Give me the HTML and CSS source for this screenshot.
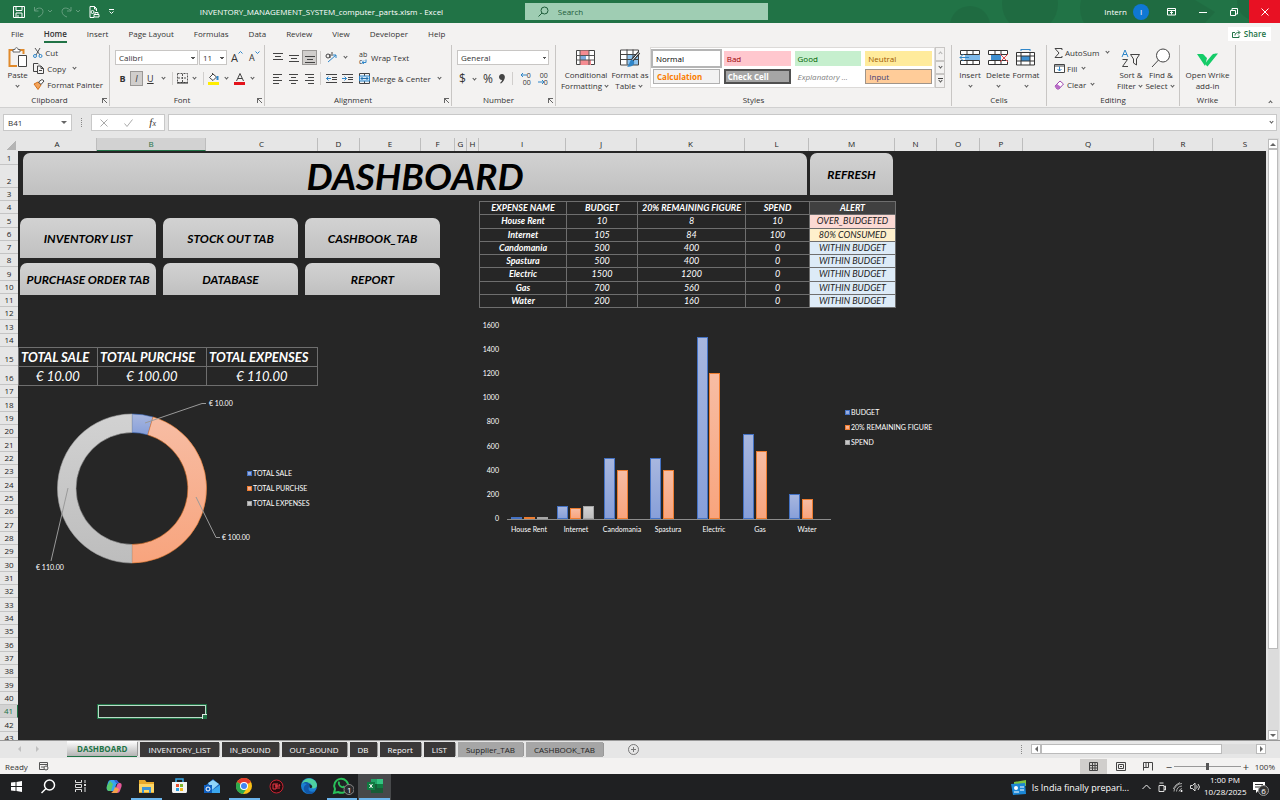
FILE: index.html
```html
<!DOCTYPE html>
<html lang="en">
<head>
    <meta charset="UTF-8">
    <meta name="viewport" content="width=device-width, initial-scale=1">
    <link rel="stylesheet" href="styles.css">
    <title>INVENTORY_MANAGEMENT_SYSTEM_computer_parts.xlsm - Excel</title>
</head>
<body>

<header class="titlebar">
    <div class="title-left">
        <div class="quick">
            <button aria-label="Save"><svg width="12" height="12" viewBox="0 0 12 12"><path d="M.5.5h11v11h-11zM3 .5v4h6v-4M3 11.5V7h6v4.5M5 9v2" fill="none" stroke="#fff"/></svg></button>
            <button class="dim" aria-label="Undo"><svg width="20" height="12" viewBox="0 0 20 12"><path d="M1.500 1v4h4M1.500 5C4 1 10 1 10 5.500 10 8 8 10 5 11M15 4l2 2 2-2" fill="none" stroke="#fff"/></svg></button>
            <button class="dim" aria-label="Redo"><svg width="20" height="12" viewBox="0 0 20 12"><path d="M10 1v4H6M10 5C7 1 1 1 1 5.500 1 8 3 10 6 11M15 4l2 2 2-2" fill="none" stroke="#fff"/></svg></button>
            <button aria-label="Print preview"><svg width="11" height="12" viewBox="0 0 11 12"><path d="M5 11.500H1V.5h4.500l2 2V5M5.500.5v2.500h2M5 8.500h5v2.500H5zM6 8.500V6.500h3v2" fill="none" stroke="#fff"/><circle cx="3.500" cy="6" r="1.500" fill="none" stroke="#fff"/></svg></button>
            <button aria-label="Customize toolbar"><svg width="7" height="7" viewBox="0 0 7 7"><path d="M1 1.500h5M1.500 3.500l2 2 2-2" fill="none" stroke="#fff"/></svg></button>
        </div>
        <div class="doc-name">INVENTORY_MANAGEMENT_SYSTEM_computer_parts.xlsm - Excel</div>
    </div>
    <label class="search">
        <svg width="11" height="11" viewBox="0 0 11 11"><circle cx="6.500" cy="4.500" r="3.500" fill="none" stroke="#1e5c3a"/><path d="M4 7L.5 10.500" stroke="#1e5c3a"/></svg>
        <input type="text" placeholder="Search" aria-label="Search">
    </label>
    <div class="title-right">
        <svg class="blobs" width="370" height="23" viewBox="0 0 370 23"><g fill="#1c5b38" opacity=".3"><circle cx="60" cy="26" r="20"/><circle cx="120" cy="4" r="28"/><circle cx="200" cy="8" r="30"/><path d="M190 0h95l20 12-10 11H180z"/><circle cx="345" cy="2" r="18"/></g></svg>
        <span class="user">Intern</span>
        <span class="avatar">I</span>
        <button class="win" aria-label="Ribbon display options"><svg width="9" height="8" viewBox="0 0 9 8"><path d="M.5.5h8v6.500h-8zM.5 2.500h8M4.500 6.500v-3M3 5l1.500-1.500L6 5" fill="none" stroke="#fff"/></svg></button>
        <button class="win" aria-label="Minimize"><svg width="8" height="8" viewBox="0 0 8 8"><path d="M0 4.500h8" stroke="#fff"/></svg></button>
        <button class="win" aria-label="Restore"><svg width="8" height="8" viewBox="0 0 8 8"><path d="M.5 2.500h5v5h-5zM2 2V.5h5.500V6H6" fill="none" stroke="#fff"/></svg></button>
        <button class="win close" aria-label="Close"><svg width="8" height="8" viewBox="0 0 8 8"><path d="M.5.5l7 7M7.500.5l-7 7" stroke="#fff"/></svg></button>
    </div>
</header>

<nav class="tabs">
    <a href="#">File</a>
    <a href="#" class="current">Home</a>
    <a href="#">Insert</a>
    <a href="#">Page Layout</a>
    <a href="#">Formulas</a>
    <a href="#">Data</a>
    <a href="#">Review</a>
    <a href="#">View</a>
    <a href="#">Developer</a>
    <a href="#">Help</a>
    <button class="share"><svg width="9" height="8" viewBox="0 0 9 8"><path d="M3 2.500H.5v5h6.500V5.500M3 5.500C3 3 4.500 2.500 7.500 2.500M6 .5l2 2-2 2" fill="none" stroke="#217346"/></svg>Share</button>
</nav>

<section class="ribbon">
    <div class="group g-clip">
        <div class="tools">
            <button class="big paste"><svg width="20" height="22" viewBox="0 0 20 22"><path d="M5 3H1.500v16H9M12 3h3.500v4" fill="none" stroke="#e08a2c" stroke-width="2"/><path d="M5 5V2.500h2C7 0 10 0 10 2.500h2V5z" fill="#fff" stroke="#666"/><path d="M10.500 8.500h8v11h-8z" fill="#fff" stroke="#444"/></svg>Paste<i class="chev"></i></button>
            <div class="stack">
                <button><svg width="10" height="10" viewBox="0 0 10 10"><path d="M2 0l5 7M7 0L3 7" stroke="#555"/><circle cx="2" cy="8" r="1.500" fill="none" stroke="#2f86c9"/><circle cx="7.500" cy="8" r="1.500" fill="none" stroke="#2f86c9"/></svg>Cut</button>
                <button><svg width="12" height="11" viewBox="0 0 12 11"><path d="M4 8.500H.5v-8H5l1 1M4.500 3H8l2.500 2.500v5h-6zM8 3v2.500h2.500M6 7.500h3" fill="none" stroke="#444"/></svg>Copy&nbsp;<i class="chev"></i></button>
                <button><svg width="12" height="11" viewBox="0 0 12 11"><path d="M1 5l4-2 3 3-3 4.500z" fill="#f2a45c" stroke="#d6711a"/><path d="M5.500 3L8 5.500 11 2 9 .5z" fill="#fff" stroke="#444"/></svg>Format Painter</button>
            </div>
        </div>
        <div class="caption">Clipboard<i class="launch"></i></div>
    </div>

    <div class="group g-font">
        <div class="tools col">
            <div class="line">
                <span class="combo"><select class="fname" aria-label="Font"><option>Calibri</option></select><select class="fsize" aria-label="Font size"><option>11</option></select></span>
                <button class="grow">A<svg width="5" height="3" viewBox="0 0 5 3"><path d="M.5 2.500l2-2 2 2" fill="none" stroke="#2f86c9"/></svg></button>
                <button class="grow small">A<svg width="5" height="3" viewBox="0 0 5 3"><path d="M.5.5l2 2 2-2" fill="none" stroke="#2f86c9"/></svg></button>
            </div>
            <div class="line">
                <button class="sq"><b>B</b></button>
                <button class="sq on"><em>I</em></button>
                <button class="sq"><u>U</u></button><i class="chev"></i>
                <i class="sep"></i>
                <button class="sq" aria-label="Borders"><svg width="11" height="11" viewBox="0 0 11 11"><path d="M.5.5h10v9H.5zM5.500 1v9M1 5h9" fill="none" stroke="#555" stroke-dasharray="2 1"/><path d="M0 10h11" stroke="#222"/></svg></button><i class="chev"></i>
                <i class="sep"></i>
                <button class="sq" aria-label="Fill colour"><svg width="12" height="12" viewBox="0 0 12 12"><path d="M5 1L1.500 4.500 5 7.500l3.500-3.500zM4 0l2 2" fill="#fff" stroke="#444"/><path d="M9.500 3v4" stroke="#2f86c9" stroke-width="2"/><path d="M0 10.500h11" stroke="#ffed00" stroke-width="3"/></svg></button><i class="chev"></i>
                <button class="sq" aria-label="Font colour"><svg width="12" height="12" viewBox="0 0 12 12"><path d="M2.500 8L6 .5 9.500 8M4 5.500h4" fill="none" stroke="#444"/><path d="M0 10.500h11" stroke="#e3131b" stroke-width="3"/></svg></button><i class="chev"></i>
            </div>
        </div>
        <div class="caption">Font<i class="launch"></i></div>
    </div>

    <div class="group g-align">
        <div class="tools">
            <div class="col">
                <div class="line">
                    <button class="sq" aria-label="Top"><svg width="10" height="10" viewBox="0 0 10 10"><path d="M0 .5h10M2 3.500h6M0 6.500h10" stroke="#444"/></svg></button>
                    <button class="sq" aria-label="Middle"><svg width="10" height="10" viewBox="0 0 10 10"><path d="M0 2.500h10M2 5.500h6M0 8.500h10" stroke="#444"/></svg></button>
                    <button class="sq on" aria-label="Bottom"><svg width="10" height="10" viewBox="0 0 10 10"><path d="M0 3.500h10M2 6.500h6M0 9.500h10" stroke="#444"/></svg></button>
                    <i class="sep"></i>
                    <button class="sq" aria-label="Orientation"><svg width="13" height="11" viewBox="0 0 13 11"><path d="M3 10L11 3M8 3h3v3" fill="none" stroke="#2f86c9"/><circle cx="3" cy="4" r="2" fill="none" stroke="#444"/><path d="M5 2v4M7 0v4" stroke="#444"/></svg></button><i class="chev"></i>
                </div>
                <div class="line">
                    <button class="sq" aria-label="Left"><svg width="10" height="10" viewBox="0 0 10 10"><path d="M0 .5h9M0 3.500h6M0 6.500h9M0 9.500h6" stroke="#444"/></svg></button>
                    <button class="sq" aria-label="Center"><svg width="10" height="10" viewBox="0 0 10 10"><path d="M0 .5h9M2 3.500h5M0 6.500h9M2 9.500h5" stroke="#444"/></svg></button>
                    <button class="sq" aria-label="Right"><svg width="10" height="10" viewBox="0 0 10 10"><path d="M0 .5h9M3 3.500h6M0 6.500h9M3 9.500h6" stroke="#444"/></svg></button>
                    <i class="sep"></i>
                    <button class="sq" aria-label="Decrease indent"><svg width="11" height="9" viewBox="0 0 11 9"><path d="M0 .5h11M6 3.500h5M6 5.500h5M0 8.500h11" stroke="#444"/><path d="M5 4.500H.5M2.500 2.500l-2 2 2 2" fill="none" stroke="#2f86c9"/></svg></button>
                    <button class="sq" aria-label="Increase indent"><svg width="11" height="9" viewBox="0 0 11 9"><path d="M0 .5h11M6 3.500h5M6 5.500h5M0 8.500h11" stroke="#444"/><path d="M0 4.500h4.500M2.500 2.500l2 2-2 2" fill="none" stroke="#2f86c9"/></svg></button>
                </div>
            </div>
            <div class="col wrap">
                <div class="line"><button><span class="abc"><span>ab</span><span>c<svg width="5" height="5" viewBox="0 0 5 5"><path d="M0 3.500h4V.5M2 1.500l-2 2 2 1.500" fill="none" stroke="#2f86c9"/></svg></span></span>Wrap Text</button></div>
                <div class="line"><button><svg width="11" height="11" viewBox="0 0 11 11"><path d="M.5.5h10v10H.5zM5.500.5v3M5.500 8v3" fill="none" stroke="#444"/><path d="M.5 3h10v5H.5z" fill="#cfe6f8" stroke="#2f86c9"/><path d="M2 5.500h7M3.500 4L2 5.500 3.500 7M7.500 4L9 5.500 7.500 7" fill="none" stroke="#2470ac"/></svg>Merge &amp; Center&nbsp;<i class="chev"></i></button></div>
            </div>
        </div>
        <div class="caption">Alignment<i class="launch"></i></div>
    </div>

    <div class="group g-num">
        <div class="tools col">
            <div class="line"><select class="fmt" aria-label="Number format"><option>General</option></select></div>
            <div class="line signs">
                <button>$</button><i class="chev"></i><button>%</button>
                <button aria-label="Comma style"><svg width="6" height="10" viewBox="0 0 6 10"><path d="M3 0c4 0 4 6-1 9.500L1 9c1-1 2-2 2-3C-1 6-1 0 3 0z" fill="#444"/></svg></button>
                <i class="sep"></i>
                <button class="dec" aria-label="Increase decimal"><span><svg width="6" height="4" viewBox="0 0 6 4"><path d="M0 2h6M2 0L0 2l2 2" fill="none" stroke="#2f86c9"/></svg>0</span><span>00</span></button>
                <button class="dec" aria-label="Decrease decimal"><span>00</span><span><svg width="6" height="4" viewBox="0 0 6 4"><path d="M0 2h6M4 0l2 2-2 2" fill="none" stroke="#2f86c9"/></svg>0</span></button>
            </div>
        </div>
        <div class="caption">Number<i class="launch"></i></div>
    </div>

    <div class="group g-styles">
        <div class="tools">
            <button class="big"><svg width="20" height="18" viewBox="0 0 20 18"><path d="M.5 1.500h18v14H.5z" fill="#fff" stroke="#444"/><path d="M4 1.500h9v5H4zM4 11h11v5H4z" fill="#f48b91"/><path d="M4 6.500h6V11H4z" fill="#7cabdf"/><path d="M4 1v15M13 1v15M.5 6.500h18M.5 11h18" stroke="#555" fill="none"/></svg>Conditional<span>Formatting<i class="chev"></i></span></button>
            <button class="big as-table"><svg width="21" height="19" viewBox="0 0 21 19"><path d="M.5 1.500h18v15H.5z" fill="#fff"/><path d="M7 6h12v10.500H7z" fill="#8ec3ee"/><path d="M.5 1.500h18v15H.5zM7 1v15M13 1v15M.5 6h18M.5 11h18" stroke="#444" fill="none"/><path d="M19 4l-7 8" stroke="#333" stroke-width="3"/><path d="M19 4l-7 8" stroke="#fff"/><path d="M12 11c-3 1-2 5-5 7 5 1 8-2 7-5z" fill="#2f86c9"/></svg>Format as<span>Table<i class="chev"></i></span></button>
            <div class="gallery">
                <button class="st normal">Normal</button>
                <button class="st bad">Bad</button>
                <button class="st good">Good</button>
                <button class="st neutral">Neutral</button>
                <button class="st calc">Calculation</button>
                <button class="st check">Check Cell</button>
                <button class="st expl">Explanatory ...</button>
                <button class="st inp">Input</button>
            </div>
            <div class="gal-scroll">
                <button aria-label="Up"><i class="chev up"></i></button>
                <button aria-label="Down"><i class="chev"></i></button>
                <button class="more" aria-label="More"><i class="chev"></i></button>
            </div>
        </div>
        <div class="caption">Styles</div>
    </div>

    <div class="group g-cells">
        <div class="tools">
            <button class="big"><svg width="22" height="18" viewBox="0 0 22 18"><path d="M1.500 1.500h19v4h-19zM1.500 11.500h19v4h-19zM8 1.500v4M14 1.500v4M8 11.500v4M14 11.500v4" fill="#fff" stroke="#333"/><path d="M6 6h15v5H6z" fill="#7db9ea"/><path d="M10 8.500H1M4.500 5L1 8.500 4.500 12" fill="none" stroke="#2f86c9"/></svg>Insert<i class="chev"></i></button>
            <button class="big"><svg width="22" height="18" viewBox="0 0 22 18"><path d="M1.500 1.500h19v4h-19zM1.500 11.500h19v4h-19zM8 1.500v4M14 1.500v4M8 11.500v4M14 11.500v4" fill="#fff" stroke="#333"/><path d="M4 6h10v5H4z" fill="#3d8fd1"/><path d="M13 5l8 8M21 5l-8 8" fill="none" stroke="#e5484d"/></svg>Delete<i class="chev"></i></button>
            <button class="big"><svg width="20" height="18" viewBox="0 0 20 18"><path d="M.5 3.500h18v12H.5z" fill="#fff"/><path d="M5 7h9v5H5z" fill="#3d8fd1"/><path d="M.5 3.500h18v12.500H.5zM5 3v13M14 3v13M.5 7h18M.5 12h18" fill="none" stroke="#333"/><path d="M5 .5h9M5 0v2M14 0v2" stroke="#2f86c9"/></svg>Format<i class="chev"></i></button>
        </div>
        <div class="caption">Cells</div>
    </div>

    <div class="group g-edit">
        <div class="tools">
            <div class="stack">
                <button><svg width="9" height="10" viewBox="0 0 9 10"><path d="M8 2V.5H1L5 5 1 9.500h7V8" fill="none" stroke="#444"/></svg>AutoSum&nbsp; <i class="chev"></i></button>
                <button><svg width="11" height="9" viewBox="0 0 11 9"><path d="M.5.5h10v8H.5zM.5 2h10" fill="#fff" stroke="#444"/><path d="M5.500 2.500v4.500M3.500 5l2 2 2-2" fill="none" stroke="#2f86c9"/></svg>Fill<i class="chev"></i></button>
                <button><svg width="11" height="10" viewBox="0 0 11 10"><path d="M1 6l5-5 3.500 3L5 9H3z" fill="#fff" stroke="#a04bb0"/><path d="M1 6l2-2 4 3-2 2H3z" fill="#b86bc6"/></svg>Clear<i class="chev"></i></button>
            </div>
            <button class="big"><svg width="20" height="18" viewBox="0 0 20 18"><path d="M1 8L4 1l3 7M2 5.500h4" fill="none" stroke="#2f86c9"/><path d="M1.500 10.500h5l-5 7h5.500M9.500 5.500h9L15.500 10v6l-3-2v-4z" fill="none" stroke="#444"/></svg>Sort &amp;<span>Filter<i class="chev"></i></span></button>
            <button class="big"><svg width="20" height="20" viewBox="0 0 20 20"><circle cx="12" cy="7.500" r="6.500" fill="#fff" stroke="#444"/><path d="M7.500 12L1 19" stroke="#444"/></svg>Find &amp;<span>Select<i class="chev"></i></span></button>
        </div>
        <div class="caption">Editing</div>
    </div>

    <div class="group g-wrike">
        <div class="tools">
            <button class="big"><svg width="21" height="20" viewBox="0 0 21 20"><path d="M0 6h5.500c1.500 0 3 3 4.500 4L8 18zM10 13l5-6c1-1 2-1.500 6-1.500L10.500 18.500 8 16z" fill="#14cc68"/></svg>Open Wrike<span>add-in</span></button>
        </div>
        <div class="caption">Wrike</div>
    </div>
    <button class="collapse" aria-label="Collapse the ribbon"><i class="chev up"></i></button>
</section>

<section class="formula-bar">
    <div class="name-box"><input type="text" value="B41" aria-label="Name box"><i class="tri"></i></div>
    <i class="dots"></i>
    <div class="fx">
        <button aria-label="Cancel"><svg width="8" height="8" viewBox="0 0 8 8"><path d="M.5.5l7 7M7.500.5l-7 7" stroke="#aaa"/></svg></button>
        <button aria-label="Enter"><svg width="9" height="8" viewBox="0 0 9 8"><path d="M.5 4.500l2.500 3 5.500-7" fill="none" stroke="#aaa"/></svg></button>
        <button class="fn" aria-label="Insert function"><em>f</em><small>x</small></button>
    </div>
    <div class="formula"><input type="text" aria-label="Formula"><i class="chev"></i></div>
</section>

<main class="sheet">
    <div class="corner"></div>
    <div class="col-heads">
        <span>A</span><span class="sel">B</span><span>C</span><span>D</span><span>E</span><span>F</span><span>G</span><span>H</span><span>I</span><span>J</span><span>K</span><span>L</span><span>M</span><span>N</span><span>O</span><span>P</span><span>Q</span><span>R</span><span>S</span>
    </div>
    <div class="row-heads">
        <div class="r1">1</div>
        <div class="r2">2</div>
        <div class="r3">3</div>
        <div class="run run-a"><div>4</div><div>5</div><div>6</div><div>7</div><div>8</div><div>9</div><div>10</div><div>11</div><div>12</div><div>13</div><div>14</div></div>
        <div class="tall">15</div>
        <div class="tall">16</div>
        <div class="run run-b"><div>17</div><div>18</div><div>19</div><div>20</div><div>21</div><div>22</div><div>23</div><div>24</div><div>25</div><div>26</div><div>27</div><div>28</div><div>29</div><div>30</div><div>31</div><div>32</div><div>33</div><div>34</div><div>35</div><div>36</div><div>37</div><div>38</div><div>39</div><div>40</div><div class="sel">41</div><div>42</div><div>43</div></div>
    </div>

    <div class="cells">
        <div class="banner">
            <h1>DASHBOARD</h1>
            <button class="shape refresh">REFRESH</button>
        </div>
        <div class="boards">
            <div class="left">
                <div class="menu">
                    <button class="shape">INVENTORY LIST</button>
                    <button class="shape">STOCK OUT TAB</button>
                    <button class="shape">CASHBOOK_TAB</button>
                    <button class="shape">PURCHASE ORDER TAB</button>
                    <button class="shape">DATABASE</button>
                    <button class="shape">REPORT</button>
                </div>
                <table class="totals">
                    <tr><th>TOTAL SALE</th><th>TOTAL PURCHSE</th><th>TOTAL EXPENSES</th></tr>
                    <tr><td>€ 10.00</td><td>€ 100.00</td><td>€ 110.00</td></tr>
                </table>
                <svg class="chart" width="330" height="190" viewBox="18 386 330 190">
                    <defs>
                        <linearGradient id="blue" x1="0" y1="0" x2="0" y2="1"><stop offset="0" stop-color="#a8b7df"/><stop offset="1" stop-color="#879fd9"/></linearGradient>
                        <linearGradient id="orange" x1="0" y1="0" x2="0" y2="1"><stop offset="0" stop-color="#f7bda4"/><stop offset="1" stop-color="#f8a47d"/></linearGradient>
                        <linearGradient id="grey" x1="0" y1="0" x2="0" y2="1"><stop offset="0" stop-color="#d2d2d2"/><stop offset="1" stop-color="#bdbdbd"/></linearGradient>
                    </defs>
                    <g stroke-width=".6">
                        <path d="M132 414A74.500 74.500 0 0 1 153 417L147.800 434.800A56 56 0 0 0 132 432.500z" fill="url(#blue)" stroke="#4472c4"/>
                        <path d="M153 417A74.500 74.500 0 0 1 132 563V544.500A56 56 0 0 0 147.800 434.800z" fill="url(#orange)" stroke="#ed7d31"/>
                        <path d="M132 563A74.500 74.500 0 0 1 132 414V432.500A56 56 0 0 0 132 544.500z" fill="url(#grey)" stroke="#a5a5a5"/>
                    </g>
                    <path class="leader" d="M206 403.500h-4L145 423M220 537.500h-4L196 497M51 561L68 488"/>
                    <text x="209" y="406">€ 10.00</text>
                    <text x="222" y="540">€ 100.00</text>
                    <text x="36" y="570">€ 110.00</text>
                    <rect x="247.500" y="471.500" width="4" height="4" fill="url(#blue)" stroke="#4472c4"/>
                    <rect x="247.500" y="486.500" width="4" height="4" fill="url(#orange)" stroke="#ed7d31"/>
                    <rect x="247.500" y="501.500" width="4" height="4" fill="url(#grey)" stroke="#a5a5a5"/>
                    <text x="253" y="476">TOTAL SALE</text>
                    <text x="253" y="491">TOTAL PURCHSE</text>
                    <text x="253" y="506">TOTAL EXPENSES</text>
                </svg>
            </div>
            <div class="right">
                <table class="expenses">
                    <tr><th>EXPENSE NAME</th><th>BUDGET</th><th>20% REMAINING FIGURE</th><th>SPEND</th><th class="alert">ALERT</th></tr>
                    <tr><th>House Rent</th><td>10</td><td>8</td><td>10</td><td class="over">OVER_BUDGETED</td></tr>
                    <tr><th>Internet</th><td>105</td><td>84</td><td>100</td><td class="warn">80% CONSUMED</td></tr>
                    <tr><th>Candomania</th><td>500</td><td>400</td><td>0</td><td class="ok">WITHIN BUDGET</td></tr>
                    <tr><th>Spastura</th><td>500</td><td>400</td><td>0</td><td class="ok">WITHIN BUDGET</td></tr>
                    <tr><th>Electric</th><td>1500</td><td>1200</td><td>0</td><td class="ok">WITHIN BUDGET</td></tr>
                    <tr><th>Gas</th><td>700</td><td>560</td><td>0</td><td class="ok">WITHIN BUDGET</td></tr>
                    <tr><th>Water</th><td>200</td><td>160</td><td>0</td><td class="ok">WITHIN BUDGET</td></tr>
                </table>
                <svg class="chart" width="466" height="230" viewBox="479 308 466 230">
                    <g class="ticks">
                        <text x="499" y="328">1600</text><text x="499" y="352">1400</text><text x="499" y="376">1200</text><text x="499" y="400">1000</text><text x="499" y="424">800</text><text x="499" y="449">600</text><text x="499" y="473">400</text><text x="499" y="497">200</text><text x="499" y="521">0</text>
                    </g>
                    <g fill="url(#blue)" stroke="#4472c4">
                        <rect x="511.500" y="517.500" width="10" height="1"/><rect x="557.500" y="506.500" width="10" height="12"/><rect x="604.500" y="458.500" width="10" height="60"/><rect x="650.500" y="458.500" width="10" height="60"/><rect x="697.500" y="337.500" width="10" height="181"/><rect x="743.500" y="434.500" width="10" height="84"/><rect x="789.500" y="494.500" width="10" height="24"/>
                    </g>
                    <g fill="url(#orange)" stroke="#ed7d31">
                        <rect x="524.500" y="517.500" width="10" height="1"/><rect x="570.500" y="508.500" width="10" height="10"/><rect x="617.500" y="470.500" width="10" height="48"/><rect x="663.500" y="470.500" width="10" height="48"/><rect x="709.500" y="373.500" width="10" height="145"/><rect x="756.500" y="451.500" width="10" height="67"/><rect x="802.500" y="499.500" width="10" height="19"/>
                    </g>
                    <g fill="url(#grey)" stroke="#a5a5a5">
                        <rect x="537.500" y="517.500" width="10" height="1"/><rect x="583.500" y="506.500" width="10" height="12"/>
                    </g>
                    <path d="M507 519.500h324" stroke="#8c8c8c"/>
                    <g class="cats">
                        <text x="529" y="532">House Rent</text><text x="576" y="532">Internet</text><text x="622" y="532">Candomania</text><text x="668" y="532">Spastura</text><text x="714" y="532">Electric</text><text x="760" y="532">Gas</text><text x="807" y="532">Water</text>
                    </g>
                    <rect x="845.500" y="410.500" width="4" height="4" fill="url(#blue)" stroke="#4472c4"/>
                    <rect x="845.500" y="425.500" width="4" height="4" fill="url(#orange)" stroke="#ed7d31"/>
                    <rect x="845.500" y="440.500" width="4" height="4" fill="url(#grey)" stroke="#a5a5a5"/>
                    <text x="851" y="415">BUDGET</text>
                    <text x="851" y="430">20% REMAINING FIGURE</text>
                    <text x="851" y="445">SPEND</text>
                </svg>
            </div>
        </div>
        <div class="selection"></div>
    </div>

    <div class="vscroll">
        <button aria-label="Scroll up"><i class="tri up"></i></button>
        <div class="thumb"></div>
        <button aria-label="Scroll down"><i class="tri"></i></button>
    </div>
</main>

<nav class="sheet-tabs">
    <div class="arrows"><i class="tri prev"></i><i class="tri next"></i></div>
    <a href="#" class="active">DASHBOARD</a>
    <a href="#">INVENTORY_LIST</a>
    <a href="#">IN_BOUND</a>
    <a href="#">OUT_BOUND</a>
    <a href="#">DB</a>
    <a href="#">Report</a>
    <a href="#">LIST</a>
    <a href="#" class="grey">Supplier_TAB</a>
    <a href="#" class="grey">CASHBOOK_TAB</a>
    <button class="add" aria-label="New sheet"><svg width="11" height="11" viewBox="0 0 11 11"><circle cx="5.500" cy="5.500" r="5" fill="none" stroke="#777"/><path d="M5.500 3v5M3 5.500h5" stroke="#777"/></svg></button>
    <i class="dots"></i>
    <div class="hscroll">
        <button aria-label="Scroll left"><i class="tri prev"></i></button>
        <div class="thumb"></div>
        <button aria-label="Scroll right"><i class="tri next"></i></button>
    </div>
</nav>

<footer class="status">
    <span class="ready">Ready</span>
    <svg width="10" height="9" viewBox="0 0 10 9"><path d="M.5.5h8v7h-8zM.5 2.500h8M2 5h3" fill="none" stroke="#555"/><circle cx="7" cy="6" r="2" fill="#f3f2f1" stroke="#555"/></svg>
    <div class="views">
        <button class="on" aria-label="Normal view"><svg width="9" height="9" viewBox="0 0 9 9"><path d="M.5.5h8v8h-8zM3.500 0v9M6 0v9M0 3.500h9M0 6h9" fill="none" stroke="#444"/></svg></button>
        <button aria-label="Page layout view"><svg width="10" height="9" viewBox="0 0 10 9"><path d="M.5.5h9v8h-9zM2.500 2.500h5v4h-5zM4 4.500h2" fill="none" stroke="#444"/></svg></button>
        <button aria-label="Page break view"><svg width="10" height="9" viewBox="0 0 10 9"><path d="M.5 8.500v-8h9v8M.5 5.500h5v-5M3 .5v5" fill="none" stroke="#444"/></svg></button>
    </div>
    <button class="zoom-btn">−</button>
    <input class="zoom" type="range" min="0" max="200" value="100" aria-label="Zoom">
    <button class="zoom-btn">+</button>
    <span class="pct">100%</span>
</footer>

<div class="taskbar">
    <div class="apps">
        <button aria-label="Start"><svg width="11" height="11" viewBox="0 0 11 11"><path d="M0 1.500L4.500 1v4H0zM5.500 1L11 0v5H5.500zM0 6h4.500v4L0 9.500zM5.500 6H11v5l-5.500-1z" fill="#fff"/></svg></button>
        <button aria-label="Search"><svg width="15" height="15" viewBox="0 0 15 15"><circle cx="8.500" cy="6" r="5" fill="none" stroke="#fff" stroke-width="1.500"/><path d="M5 9.500L.5 14" stroke="#fff" stroke-width="1.500"/></svg></button>
        <button aria-label="Task view"><svg width="12" height="12" viewBox="0 0 12 12"><path d="M.5 0v2.500h6V0M.5 12V9.500h6V12M.5 4.500h6v3h-6zM10 0v3M10 7v5" fill="none" stroke="#ddd"/><path d="M9 4h2v2H9z" fill="#ddd"/></svg></button>
        <button aria-label="Copilot"><svg width="16" height="15" viewBox="0 0 16 15"><path d="M5 1h5c2 0 1 3 3 3-3 0-3 2-4 6-1 3-2 2-5 2-3 0-4-2-3-5s1-6 4-6z" fill="#36a5ee"/><path d="M1 7l3-5 3 3-2 7H3C1 12 .5 9 1 7z" fill="#58c96a"/><path d="M11 14H7c2 0 2-2 3-5s1-5 4-5c2 0 2 3 1 5s-1 5-4 5z" fill="#e7589a"/><path d="M7 14H5c2-1 3-3 4-6l4 2-2 4z" fill="#f5a04b"/><path d="M8 1h2c2 0 2 3 4 3h-4z" fill="#3660d8"/></svg></button>
        <button class="open" aria-label="File Explorer"><svg width="15" height="13" viewBox="0 0 15 13"><path d="M0 0h6l1.500 2H15v11H0z" fill="#e8a92c"/><path d="M0 4h15v8H0z" fill="#fcd667"/><path d="M3 13V7h9v6h-2v-3H5v3z" fill="#3e94d8"/></svg></button>
        <button aria-label="Store"><svg width="15" height="16" viewBox="0 0 15 16"><path d="M4 4V1h7v3" fill="none" stroke="#37a6e6" stroke-width="1.500"/><path d="M0 4h15v9c0 2-1 2-2 2H2c-1 0-2 0-2-2z" fill="#f3f3f3"/><path d="M4 6h3v3H4z" fill="#e8502f"/><path d="M8 6h3v3H8z" fill="#7fb72e"/><path d="M4 10h3v3H4z" fill="#2a9fe0"/><path d="M8 10h3v3H8z" fill="#f5b81e"/></svg></button>
        <button aria-label="Outlook"><svg width="16" height="15" viewBox="0 0 16 15"><path d="M2 6l7-6 7 6v8H2z" fill="#1b63b8"/><path d="M4 4l5-3 6 4-7 6z" fill="#8fd5fa"/><path d="M16 6v8H4z" fill="#3ba7ee"/><path d="M0 6h8v8H0z" fill="#0f5fc0"/><circle cx="4" cy="10" r="2" fill="none" stroke="#fff"/></svg></button>
        <button class="open" aria-label="Chrome"><svg width="16" height="16" viewBox="0 0 16 16"><circle cx="8" cy="8" r="8" fill="#fbc116"/><path d="M8 8L1 4a8 8 0 0 1 14 0z" fill="#e33b2e"/><path d="M8 8L1 4a8 8 0 0 0 6 12l4-6z" fill="#2da94f"/><circle cx="8" cy="8" r="4" fill="#fff"/><circle cx="8" cy="8" r="3" fill="#4285f4"/></svg></button>
        <button aria-label="Recorder"><svg width="15" height="15" viewBox="0 0 15 15"><circle cx="7.500" cy="7.500" r="6.500" fill="#260b0d" stroke="#c92332"/><path d="M4 5h3v5H4zM8 4v6M6 7h5l-1-2M10 8v2" fill="none" stroke="#e63745"/></svg></button>
        <button aria-label="Edge"><svg width="16" height="16" viewBox="0 0 16 16"><circle cx="8" cy="8" r="8" fill="#1a7fd4"/><path d="M1 6C3-2 15-1 16 7c0 3-3 4-6 3 3-5-5-7-9-4z" fill="#4ed0a0"/><path d="M1 6c4-4 9-1 7 3s3 6 6 4c-2 4-9 4-11-1-1-3 1-5 3-6-2-1-4-1-5 0z" fill="#1257a8"/><path d="M9 10c-1-1 0-3-1-4 4 1 4 4 2 4z" fill="#202124"/></svg></button>
        <button class="open" aria-label="WhatsApp"><svg width="23" height="18" viewBox="-2 0 23 18"><path d="M1 16l1-4a7 7 0 1 1 3 3z" fill="#202124" stroke="#29c15a" stroke-width="2"/><path d="M5 5c1-2 2 0 2 1-1 1 2 4 3 3s3 1 1 2c-3 1-7-3-6-6z" fill="#29c15a"/><circle cx="16" cy="12.500" r="5" fill="#2b2c2e" stroke="#888"/><text x="14" y="16">1</text></svg></button>
        <button class="open front" aria-label="Excel"><svg width="16" height="14" viewBox="0 0 16 14"><path d="M4 0h6v7H4z" fill="#21a366"/><path d="M10 0h6v5h-6z" fill="#33c481"/><path d="M4 5h12v9H4z" fill="#185c37"/><path d="M10 5h6v4h-6z" fill="#107c41"/><path d="M0 3h8v8H0z" fill="#107c41"/><path d="M2.500 5l3 4M5.500 5l-3 4" stroke="#fff"/></svg></button>
    </div>
    <div class="tray">
        <a href="#" class="news"><svg width="16" height="15" viewBox="0 0 16 15"><path d="M3 2l12-2v6H3z" fill="#7ec242"/><path d="M0 4l14-1 1 11-13 1z" fill="#1b87d6"/><circle cx="5" cy="8" r="2" fill="#fff"/><path d="M9 7h4M9 10h4M3 12h5" stroke="#fff"/></svg>Is India finally prepari...</a>
        <svg width="9" height="6" viewBox="0 0 9 6"><path d="M.5 5l4-4 4 4" fill="none" stroke="#eee"/></svg>
        <svg width="8" height="11" viewBox="0 0 8 11"><path d="M1 3.500h5v6H1zM6 5l1.500-1v4L6 7M1.500 1h4" fill="none" stroke="#ddd"/></svg>
        <svg width="10" height="10" viewBox="0 0 10 10"><path d="M1 9.500A8 8 0 0 1 9 1.500M3.500 9.500A6 6 0 0 1 9 4M6 9.500A4 4 0 0 1 9 6.500M0 7l3-4 4-2.500" fill="none" stroke="#aaa"/><circle cx="8.500" cy="9" r="1" fill="#fff"/></svg>
        <svg width="11" height="10" viewBox="0 0 11 10"><path d="M.5 3.500h2L5 1v8L2.500 6.500h-2zM6.500 3.500q1.500 1.500 0 3M8 2q3 3 0 6" fill="none" stroke="#ddd"/></svg>
        <div class="clock"><span>1:00 PM</span><span>10/28/2025</span></div>
        <button class="notes" aria-label="Notifications"><svg width="12" height="11" viewBox="0 0 12 11"><path d="M0 0h12v8H6l-3 3V8H0z" fill="#fff"/><path d="M2 2.500h8M2 5h8" stroke="#333"/></svg><span class="count">6</span></button>
    </div>
</div>

</body>
</html>
```
FILE: styles.css
```css
* {
    box-sizing: border-box;
}

body {
    margin: 0;
    height: 100vh;
    display: flex;
    flex-direction: column;
    overflow: hidden;
    font: 8px/11px "Open Sans", "Noto Sans", sans-serif;
    color: #333;
    background: #e6e6e6;
}

button, input, select {
    font: inherit;
    color: inherit;
    background: none;
    border: 0;
    border-radius: 0;
    margin: 0;
    padding: 0;
    outline: 0;
}

a {
    color: inherit;
    text-decoration: none;
}

svg {
    display: block;
    flex: none;
}

/* small arrows used all over the ribbon */
.chev {
    display: inline-block;
    flex: none;
    width: 3px;
    height: 3px;
    margin: 0 3px 2px;
    border: solid #555;
    border-width: 0 1px 1px 0;
    transform: rotate(45deg);
}

.chev.up {
    margin-bottom: 0;
    transform: rotate(225deg);
}

.tri {
    flex: none;
    border: 3px solid transparent;
    border-top-color: #666;
    border-bottom: 0;
}

.tri.up {
    border: 3px solid transparent;
    border-bottom-color: #666;
    border-top: 0;
}

.tri.prev {
    border: 3px solid transparent;
    border-right-color: #666;
    border-left: 0;
}

.tri.next {
    border: 3px solid transparent;
    border-left-color: #666;
    border-right: 0;
}

.dots {
    width: 1px;
    height: 9px;
    border-left: 1px dotted #888;
}

/* title bar */
.titlebar {
    flex: none;
    display: flex;
    align-items: center;
    height: 23px;
    background: #217346;
    color: #fff;
}

.title-left {
    flex: 0 0 41%;
    display: flex;
    align-items: center;
}

.quick {
    display: flex;
    align-items: center;
    width: 118px;
    padding-left: 13px;
    gap: 8px;
}

.quick .dim {
    opacity: .3;
}

.doc-name {
    flex: 1;
    padding-bottom: 1px;
    text-align: center;
    white-space: nowrap;
}

.search {
    flex: 0 0 19%;
    display: flex;
    align-items: center;
    gap: 9px;
    height: 17px;
    padding-left: 13px;
    background: #9fcdb3;
}

.search input {
    width: 160px;
}

.search input::placeholder {
    color: #1e5c3a;
    opacity: 1;
}

.title-right {
    position: relative;
    flex: 1;
    display: flex;
    align-items: center;
    justify-content: flex-end;
    height: 23px;
}

.blobs {
    position: absolute;
    right: 0;
    top: 0;
}

.user, .avatar, .win {
    position: relative;
}

.avatar {
    width: 16px;
    margin: 0 7px 0 6px;
    line-height: 16px;
    text-align: center;
    border-radius: 50%;
    background: #0f78d4;
}

.win {
    display: flex;
    align-items: center;
    justify-content: center;
    width: 31px;
    height: 23px;
}

.win.close {
    background: #e81123;
}

/* ribbon tabs */
.tabs {
    flex: none;
    display: flex;
    align-items: center;
    gap: 20px;
    height: 21px;
    padding: 0 9px 0 11px;
    background: #f3f2f1;
}

.tabs .current {
    font-weight: 600;
    border-bottom: 2px solid #217346;
    line-height: 15px;
    padding-top: 2px;
}

.share {
    display: flex;
    align-items: center;
    gap: 3px;
    height: 14px;
    margin-left: auto;
    padding: 0 5px 0 4px;
    background: #fff;
    color: #217346;
    font-weight: 600;
}

/* ribbon */
.ribbon {
    flex: none;
    display: flex;
    height: 64px;
    background: #f3f2f1;
    border-bottom: 1px solid #d0d0d0;
    white-space: nowrap;
}

.group {
    flex: none;
    display: flex;
    flex-direction: column;
    margin: 1px 0;
    border-right: 1px solid #c8c6c4;
}

.g-clip { width: 110px; }
.g-font { width: 155px; }
.g-align { width: 187px; }
.g-num { width: 104px; }
.g-styles { width: 396px; }
.g-cells { width: 95px; }
.g-edit { width: 133px; }
.g-wrike { width: 56px; }

.tools {
    flex: 1;
    display: flex;
    padding: 0 6px;
}

.col {
    display: flex;
    flex-direction: column;
    gap: 6px;
    padding-top: 5px;
}

.line {
    display: flex;
    align-items: center;
    height: 15px;
}

.stack {
    display: flex;
    flex-direction: column;
    gap: 5px;
    padding-top: 2px;
}

.stack button, .wrap button {
    display: flex;
    align-items: center;
    gap: 2px;
    height: 11px;
}

.caption {
    position: relative;
    height: 11px;
    line-height: 10px;
    text-align: center;
    padding-right: 10px;
}

.g-styles .caption, .g-cells .caption, .g-edit .caption, .g-wrike .caption {
    padding-right: 0;
}

.launch {
    position: absolute;
    right: 2px;
    top: 3px;
    width: 5px;
    height: 5px;
    border: solid #666;
    border-width: 1px 0 0 1px;
    background: linear-gradient(45deg, transparent 40%, #666 40%, #666 60%, transparent 60%);
}

.big {
    display: flex;
    flex-direction: column;
    align-items: center;
    justify-content: flex-start;
    padding-top: 2px;
}

.big svg {
    height: 22px;
}

.big > .chev {
    margin-top: 4px;
}

.paste {
    width: 26px;
    margin-right: 4px;
}

.sq {
    display: flex;
    align-items: center;
    justify-content: center;
    width: 15px;
    height: 15px;
}

.sq.on {
    background: #d0cecc;
    border: 1px solid #9a9896;
}

.sep {
    width: 1px;
    height: 13px;
    margin: 0 3px;
    background: #d0cecc;
}

.sq + .chev {
    margin: 0 4px 2px;
}

.g-font .line:last-child {
    gap: 1px;
    padding-left: 1px;
}

.g-font .sep {
    margin: 0 2px;
}

.g-font b, .g-font em, .g-font u {
    font-size: 9px;
}

.g-align .tools {
    padding-left: 5px;
}

.g-align .line {
    gap: 1px;
}

.g-align .sep {
    margin: 0 2px;
}

.combo {
    display: flex;
    gap: 1px;
}

select {
    appearance: none;
    height: 15px;
    padding-left: 3px;
    background-color: #fff;
    border: 1px solid #c8c6c4;
    background-image: linear-gradient(45deg, transparent 50%, #555 50%), linear-gradient(-45deg, transparent 50%, #555 50%);
    background-size: 2px 2px;
    background-repeat: no-repeat;
    background-position: right 4px center, right 2px center;
}

.g-font .tools {
    padding-left: 5px;
}

.fname { width: 83px; }
.fsize { width: 28px; }
.fmt { width: 93px; }

.grow {
    display: flex;
    margin-left: 4px;
    font-size: 11px;
    line-height: 13px;
}

.grow.small {
    margin-left: 6px;
    font-size: 9px;
}

.wrap {
    padding-left: 4px;
}

.abc {
    display: flex;
    flex-direction: column;
    width: 10px;
    font-size: 7px;
    line-height: 7px;
}

.abc span, .dec span {
    display: flex;
    align-items: center;
    height: 7px;
}

.g-num .tools {
    padding-left: 5px;
}

.signs {
    gap: 6px;
    padding-left: 2px;
    font-size: 12px;
}

.signs .chev, .signs .sep {
    margin: 0 1px;
}

.dec {
    width: 11px;
    font-size: 7px;
    line-height: 7px;
}

.dec span {
    justify-content: flex-end;
}

.g-styles .big {
    width: 48px;
}

.g-styles .as-table {
    width: 40px;
}

.gallery {
    flex: 1;
    display: grid;
    grid-template-columns: repeat(4, 1fr);
    grid-auto-rows: 15px;
    gap: 3px 4px;
    height: 41px;
    margin-top: 2px;
    padding: 3px 2px;
    background: #fff;
    border: 1px solid #dcdad8;
}

.st {
    padding-left: 3px;
    text-align: left;
}

.normal { color: #000; outline: 2px solid #b5b5b5; }
.bad { background: #ffc7ce; color: #9c0006; }
.good { background: #c6efce; color: #006100; }
.neutral { background: #ffeb9c; color: #9c5700; }
.calc { background: #f2f2f2; color: #fa7d00; border: 1px solid #b0b0b0; font-weight: 700; }
.check { background: #a5a5a5; color: #fff; border: 2px solid #505050; font-weight: 700; line-height: 9px; padding-left: 2px; }
.expl { color: #7f7f7f; font-style: italic; }
.inp { background: #ffcc99; color: #3f3f76; border: 1px solid #a0958a; }

.gal-scroll {
    display: flex;
    flex-direction: column;
    width: 10px;
    height: 41px;
    margin-top: 2px;
}

.gal-scroll button {
    flex: 1;
    display: flex;
    align-items: center;
    justify-content: center;
    border: 1px solid #c8c6c4;
}

.gal-scroll .up {
    opacity: .4;
}

.gal-scroll .more {
    background: linear-gradient(#444, #444) center 3px / 5px 1px no-repeat;
}

.g-cells .big {
    width: 28px;
}

.g-cells .tools {
    padding-left: 4px;
}

.g-edit .stack {
    width: 66px;
}

.g-edit .tools {
    padding: 0 0 0 7px;
}

.g-edit .big {
    width: 30px;
}

.g-edit .stack + .big {
    margin-left: -4px;
}

.g-wrike .tools {
    justify-content: center;
}

.collapse {
    align-self: flex-end;
    margin: 0 5px 1px auto;
}

/* formula bar */
.formula-bar {
    flex: none;
    display: flex;
    align-items: center;
    height: 30px;
    padding: 0 3px 1px;
}

.formula-bar > div {
    display: flex;
    align-items: center;
    height: 17px;
    background: #fff;
    border: 1px solid #c8c8c8;
}

.name-box {
    width: 69px;
    padding: 0 4px;
}

.name-box input {
    flex: 1;
    width: 20px;
}

.formula-bar .dots {
    margin: 0 9px;
}

.fx {
    width: 74px;
    justify-content: space-around;
    margin-right: 3px;
}

.fn {
    font: 11px/12px "Liberation Serif", serif;
}

.fn small {
    font-size: 8px;
    font-style: italic;
}

.formula {
    flex: 1;
}

.formula input {
    flex: 1;
}

/* sheet */
.sheet {
    flex: 1;
    min-height: 0;
    display: grid;
    grid-template: 13px 1fr / 18px 1fr 14px;
    overflow: hidden;
}

.corner {
    background: linear-gradient(135deg, transparent 50%, #b4b4b4 50%) 7px 3px / 9px 9px no-repeat;
}

.col-heads {
    display: grid;
    grid-template-columns: 79px 109px 112px 42px 61px 34px 12px 12px 87px 71px 108px 64px 86px 42px 43px 43px 131px 59px 65px;
    overflow: hidden;
    line-height: 12px;
    text-align: center;
    color: #222;
}

.col-heads span {
    border-right: 1px solid #bdbdbd;
}

.col-heads .sel {
    background: #d2d2d2;
    color: #217346;
    border-bottom: 1px solid #217346;
}

.row-heads {
    overflow: hidden;
    text-align: center;
    color: #222;
}

.row-heads div {
    display: flex;
    flex-direction: column;
    justify-content: flex-end;
    line-height: 12px;
}

.row-heads > div:not(.run), .run div {
    border-bottom: 1px solid #c4c4c4;
}

.r1 { height: 14px; }
.r2 { height: 23px; }
.r3 { height: 13px; }
.tall { height: 19px; }
.run-a { height: 146px; }
.run-b { height: 360px; }

.run div {
    flex: 1;
}

.run .sel {
    background: #d2d2d2;
    color: #217346;
    border-right: 1px solid #217346;
}

.cells {
    position: relative;
    overflow: hidden;
    background: #262626;
    color: #fff;
    font-family: Lato, Carlito, sans-serif;
}

.selection {
    position: absolute;
    left: 79px;
    top: 553px;
    width: 110px;
    height: 15px;
    border: 1px solid #217346;
    box-shadow: inset 0 0 0 1px #b9dcc8;
}

.selection:after {
    content: "";
    position: absolute;
    right: -1px;
    bottom: -1px;
    width: 4px;
    height: 4px;
    background: #217346;
    border: solid #d8e8df;
    border-width: 1px 0 0 1px;
}

.banner {
    display: flex;
    gap: 3px;
    padding: 2px 0 0 5px;
}

h1, .shape {
    color: #000;
    font-weight: 700;
    font-style: italic;
    background: linear-gradient(#d2d2d2, #c0c0c0);
    border-radius: 7px 7px 0 0;
}

h1 {
    width: 784px;
    height: 42px;
    margin: 0;
    font-size: 37px;
    line-height: 45px;
    text-align: center;
}

.shape {
    font-size: 12px;
}

.refresh {
    width: 83px;
}

.boards {
    display: flex;
}

.left {
    width: 461px;
}

.menu {
    display: grid;
    grid-template-columns: 136px 135px 135px;
    grid-template-rows: 40px 32px;
    gap: 5px 7px;
    padding: 23px 0 0 2px;
}

.right {
    padding-top: 6px;
}

table {
    border-collapse: collapse;
    table-layout: fixed;
    font-style: italic;
    text-align: center;
}

th, td {
    padding: 0;
    border: 1px solid #6e6e6e;
    white-space: nowrap;
}

.totals {
    width: 300px;
    height: 39px;
    margin-top: 52px;
    font-size: 13px;
    line-height: 15px;
}

.totals th {
    padding-left: 2px;
    text-align: left;
}

.totals th:nth-child(1) { width: 79px; }
.totals th:nth-child(2) { width: 109px; }

.expenses {
    width: 417px;
    height: 107px;
    font-size: 9px;
    line-height: 10px;
}

.expenses th:nth-child(1) { width: 87px; }
.expenses th:nth-child(2) { width: 71px; }
.expenses th:nth-child(3) { width: 108px; }
.expenses th:nth-child(4) { width: 64px; }

.expenses .alert { background: #404040; }
.expenses .over { background: #fbd9d3; color: #222; }
.expenses .warn { background: #fff0cc; color: #222; }
.expenses .ok { background: #ddebf7; color: #222; }

.chart text {
    font-size: 7px;
    fill: #fff;
}

.leader {
    fill: none;
    stroke: #999;
}

.chart .ticks text {
    text-anchor: end;
}

.chart .cats text {
    text-anchor: middle;
}

/* scrollbars */
.vscroll {
    display: flex;
    flex-direction: column;
    grid-column: 3;
    grid-row: 1 / 3;
    width: 11px;
    margin-left: 2px;
    padding-top: 1px;
    background: #dcdcdc;
}

.vscroll button, .hscroll button {
    display: flex;
    align-items: center;
    justify-content: center;
    width: 10px;
    height: 10px;
    background: #fff;
    border: 1px solid #bbb;
}

.vscroll .thumb {
    width: 10px;
    height: 500px;
    margin-bottom: auto;
    background: #fff;
    border: 1px solid #bbb;
}

/* sheet tabs */
.sheet-tabs {
    flex: none;
    display: flex;
    align-items: center;
    height: 18px;
    border-top: 1px solid #999;
    padding: 0 14px 1px 0;
}

.arrows {
    display: flex;
    gap: 15px;
    width: 67px;
    padding-left: 18px;
    opacity: .3;
}

.sheet-tabs a {
    margin-right: 3px;
    padding: 0 8px;
    line-height: 15px;
    background: #3a3838;
    color: #fff;
    box-shadow: 2px 0 0 -1px #999;
}

.sheet-tabs a.grey {
    background: #a6a6a6;
    color: #222;
}

.sheet-tabs a.active {
    padding: 0 10px;
    background: linear-gradient(#fff, #b4b4b4);
    color: #217346;
    font-weight: 700;
    border-bottom: 1px solid #217346;
}

.add {
    margin: 0 auto 0 22px;
}

.sheet-tabs .dots {
    margin-right: 9px;
}

.hscroll {
    display: flex;
    width: 235px;
    background: #dcdcdc;
}

.hscroll .thumb {
    width: 181px;
    margin-right: auto;
    background: #fff;
    border: 1px solid #bbb;
}

/* status bar */
.status {
    flex: none;
    display: flex;
    align-items: center;
    height: 16px;
    padding: 0 5px;
    background: #f3f2f1;
}

.ready {
    width: 34px;
}

.views {
    display: flex;
    margin-left: auto;
    margin-right: 4px;
}

.views button {
    display: flex;
    align-items: center;
    justify-content: center;
    width: 27px;
    height: 15px;
}

.views .on {
    background: #d0cecc;
}

.zoom-btn {
    width: 8px;
    font-size: 11px;
}

.zoom {
    appearance: none;
    width: 67px;
    height: 11px;
    margin: 0 1px;
    background: linear-gradient(#999, #999) center / 100% 1px no-repeat;
}

.zoom::-webkit-slider-thumb {
    appearance: none;
    width: 3px;
    height: 7px;
    background: #555;
}

.pct {
    width: 25px;
    text-align: right;
}

/* taskbar */
.taskbar {
    flex: none;
    display: flex;
    height: 26px;
    background: #1f2022;
    color: #fff;
}

.apps {
    display: flex;
    width: 391px;
}

.apps button {
    flex: 1;
    display: flex;
    align-items: center;
    justify-content: center;
    border-bottom: 2px solid transparent;
}

.apps text {
    font-size: 8px;
    fill: #fff;
}

.apps .open {
    border-image: linear-gradient(90deg, transparent 10%, #6cb6ee 10%, #6cb6ee 90%, transparent 90%) 2;
}

.apps .front {
    background: #47494b;
}

.tray {
    display: flex;
    align-items: center;
    gap: 7px;
    margin-left: auto;
    padding-right: 9px;
}

.news {
    display: flex;
    align-items: center;
    gap: 5px;
    margin-right: 6px;
    font-size: 9px;
}

.clock {
    display: flex;
    flex-direction: column;
    width: 42px;
    padding-bottom: 2px;
    line-height: 12px;
    text-align: center;
    margin-left: -4px;
}

.notes {
    position: relative;
    width: 18px;
}

.count {
    position: absolute;
    left: 5px;
    top: 3px;
    width: 11px;
    height: 11px;
    line-height: 9px;
    border: 1px solid #999;
    border-radius: 50%;
    background: #333;
}
```
